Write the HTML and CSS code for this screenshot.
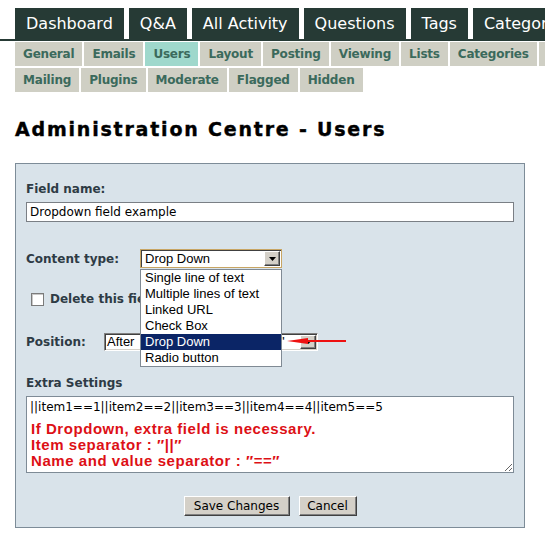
FILE: index.html
```html
<!DOCTYPE html>
<html lang="en">
<head>
<meta charset="utf-8">
<title>Administration Centre - Users</title>
<link rel="stylesheet" href="styles.css">
</head>
<body>
<div class="page">
  <nav class="main-nav">
    <a class="main-tab" href="#">Dashboard</a>
    <a class="main-tab" href="#">Q&amp;A</a>
    <a class="main-tab" href="#">All Activity</a>
    <a class="main-tab" href="#">Questions</a>
    <a class="main-tab" href="#">Tags</a>
    <a class="main-tab" href="#">Categories</a>
    <a class="main-tab" href="#">Users</a>
  </nav>

  <nav class="sub-nav">
    <div class="sub-row">
      <a class="sub-tab" href="#">General</a>
      <a class="sub-tab" href="#">Emails</a>
      <a class="sub-tab is-active" href="#">Users</a>
      <a class="sub-tab" href="#">Layout</a>
      <a class="sub-tab" href="#">Posting</a>
      <a class="sub-tab" href="#">Viewing</a>
      <a class="sub-tab" href="#">Lists</a>
      <a class="sub-tab" href="#">Categories</a>
      <a class="sub-tab" href="#">Permissions</a>
      <a class="sub-tab" href="#">Pages</a>
    </div>
    <div class="sub-row">
      <a class="sub-tab" href="#">Mailing</a>
      <a class="sub-tab" href="#">Plugins</a>
      <a class="sub-tab" href="#">Moderate</a>
      <a class="sub-tab" href="#">Flagged</a>
      <a class="sub-tab" href="#">Hidden</a>
    </div>
  </nav>

  <h1 class="title">Administration Centre - Users</h1>

  <form class="panel">
    <label class="field-label" for="field-name">Field name:</label>
    <input class="text-input" id="field-name" type="text" value="Dropdown field example">

    <div class="row row-type">
      <span class="field-label row-label">Content type:</span>
      <div class="combo combo-focus">
        <span class="combo-value">Drop Down</span>
        <span class="combo-btn"><svg width="7" height="4" viewBox="0 0 7 4"><polygon points="0,0 7,0 3.5,4" fill="#000"/></svg></span>
        <ul class="combo-list">
          <li>Single line of text</li>
          <li>Multiple lines of text</li>
          <li>Linked URL</li>
          <li>Check Box</li>
          <li class="is-selected">Drop Down</li>
          <li>Radio button</li>
        </ul>
      </div>
    </div>

    <label class="check-row">
      <span class="checkbox"></span>
      <span class="field-label">Delete this field</span>
    </label>

    <div class="row row-pos">
      <span class="field-label row-label">Position:</span>
      <div class="combo combo-wide">
        <span class="combo-value">After&nbsp; "Private notes for admin"</span>
        <span class="combo-btn"><svg width="7" height="4" viewBox="0 0 7 4"><polygon points="0,0 7,0 3.5,4" fill="#000"/></svg></span>
      </div>
      <svg class="pointer" width="60" height="10" viewBox="0 0 60 10">
        <line x1="18" y1="5" x2="59" y2="5" stroke="#ee1111" stroke-width="2"/>
        <polygon points="0,5 21,2 21,8" fill="#ee1111"/>
      </svg>
    </div>

    <span class="field-label extra-label">Extra Settings</span>
    <div class="extra-box">
      <textarea class="extra-input">||item1==1||item2==2||item3==3||item4==4||item5==5</textarea>
      <div class="extra-note">
        <p>If Dropdown, extra field is necessary.</p>
        <p>Item separator : ″||″</p>
        <p>Name and value separator : ″==″</p>
      </div>
    </div>

    <div class="actions">
      <button class="btn btn-save" type="button">Save Changes</button>
      <button class="btn btn-cancel" type="button">Cancel</button>
    </div>
  </form>
</div>
</body>
</html>
```

FILE: styles.css
```css
* {
  box-sizing: border-box;
}

html,
body {
  margin: 0;
  padding: 0;
  background: #fff;
}

body {
  width: 545px;
  height: 542px;
  overflow: hidden;
  font-family: "DejaVu Sans", Verdana, sans-serif;
  color: #000;
}

.page {
  padding-top: 8px;
}

/* top navigation */
.main-nav {
  display: flex;
  gap: 5px;
  padding-left: 15px;
  border-bottom: 2px solid #263a35;
  overflow: hidden;
  white-space: nowrap;
}

.main-tab {
  flex: none;
  display: block;
  height: 31px;
  padding: 1px 11px 0;
  line-height: 30px;
  background: #263a35;
  color: #fff;
  font-size: 16px;
  text-decoration: none;
}

/* admin sub navigation */
.sub-nav {
  margin-top: 1px;
  padding-left: 15px;
}

.sub-row {
  display: flex;
  gap: 2px;
  overflow: hidden;
  white-space: nowrap;
}

.sub-row + .sub-row {
  margin-top: 2px;
}

.sub-tab {
  flex: none;
  display: block;
  height: 24px;
  padding: 1px 8px 0;
  line-height: 23px;
  background: #cfcfc4;
  color: #3b6a5c;
  font-size: 12px;
  font-weight: bold;
  letter-spacing: -0.2px;
  text-decoration: none;
}

.sub-tab.is-active {
  background: #9fd8cc;
}

.title {
  margin: 26px 0 0 15px;
  font-size: 19px;
  line-height: 22px;
  font-weight: bold;
  letter-spacing: 1.8px;
  -webkit-text-stroke: 0.4px #000;
}

/* form panel */
.panel {
  margin: 23px 0 0 15px;
  width: 510px;
  padding: 18px 10px 11px;
  background: #d9e3ea;
  border: 1px solid #7d8c98;
  display: flex;
  flex-direction: column;
  align-items: flex-start;
}

.field-label {
  font-size: 12px;
  line-height: 14px;
  font-weight: bold;
  color: #2e3b45;
}

.text-input {
  margin: 6px 0 0;
  width: 488px;
  height: 20px;
  padding: 0 3px;
  border: 1px solid #7a7f85;
  background: #fff;
  font-family: "DejaVu Sans", Verdana, sans-serif;
  font-size: 12px;
  color: #000;
  outline: none;
}

.row {
  position: relative;
  display: flex;
  align-items: center;
}

.row-label {
  flex: none;
}

.row-type {
  margin-top: 27px;
}

.row-type .row-label {
  width: 114px;
}

.row-pos {
  margin-top: 27px;
}

.row-pos .row-label {
  width: 78px;
}

/* classic windows style combo boxes */
.combo {
  position: relative;
  display: flex;
  background: #fff;
  font-family: "Liberation Sans", Arial, sans-serif;
  font-size: 13px;
  color: #000;
}

.combo-focus {
  width: 142px;
  height: 19px;
  border: 1px solid #c8a563;
  box-shadow: inset 1px 1px 0 #404040;
}

.combo-wide {
  width: 214px;
  height: 18px;
  border: 1px solid;
  border-color: #808080 #fff #fff #808080;
  box-shadow: inset 1px 1px 0 #404040, inset -1px -1px 0 #d4d0c8;
}

.combo-value {
  flex: 1;
  min-width: 0;
  padding-left: 4px;
  line-height: 17px;
  white-space: nowrap;
  overflow: hidden;
}

.combo-wide .combo-value {
  padding-left: 2px;
  line-height: 16px;
}

.combo-btn {
  flex: none;
  width: 16px;
  height: 15px;
  margin: 1px 1px 1px 0;
  display: flex;
  align-items: center;
  justify-content: center;
  background: #d4d0c8;
  border: 1px solid;
  border-color: #fff #404040 #404040 #fff;
  box-shadow: inset -1px -1px 0 #808080;
}

.combo-wide .combo-btn {
  height: 14px;
}

.combo-list {
  position: absolute;
  z-index: 5;
  top: 19px;
  left: -1px;
  width: 142px;
  margin: 0;
  padding: 0;
  list-style: none;
  background: #fff;
  border: 1px solid #808a94;
}

.combo-list li {
  height: 16px;
  padding-left: 4px;
  line-height: 16px;
  white-space: nowrap;
}

.combo-list li.is-selected {
  background: #0b2566;
  color: #fff;
}

.check-row {
  margin-top: 24px;
  display: flex;
  align-items: center;
  gap: 6px;
  height: 14px;
}

.checkbox {
  width: 13px;
  height: 13px;
  margin-left: 5px;
  background: #fff;
  border: 1px solid #7b7b7b;
  box-shadow: inset 1px 1px 0 #c8c8c8;
}

.pointer {
  position: absolute;
  left: 261px;
  top: 3px;
}

.extra-label {
  margin-top: 25px;
}

.extra-box {
  position: relative;
  margin-top: 6px;
  width: 488px;
  height: 77px;
}

.extra-input {
  display: block;
  width: 100%;
  height: 100%;
  margin: 0;
  padding: 3px 3px;
  border: 1px solid #7e8b96;
  background: #fff;
  font-family: "DejaVu Sans", Verdana, sans-serif;
  font-size: 12px;
  line-height: 14px;
  color: #000;
  resize: both;
  outline: none;
}

.extra-note {
  position: absolute;
  top: 25px;
  left: 5px;
  color: #dd1016;
  font-family: "Liberation Sans", Arial, sans-serif;
  font-size: 15px;
  font-weight: bold;
  line-height: 16px;
  letter-spacing: 0.55px;
}

.extra-note p {
  margin: 0;
}

.actions {
  align-self: stretch;
  margin-top: 23px;
  display: flex;
  justify-content: center;
  gap: 9px;
}

.btn {
  height: 20px;
  padding: 0;
  background: #d4d0c8;
  border: 1px solid;
  border-color: #fff #404040 #404040 #fff;
  box-shadow: inset -1px -1px 0 #808080;
  font-family: "DejaVu Sans", Verdana, sans-serif;
  font-size: 12px;
  color: #000;
}

.btn-save {
  width: 106px;
}

.btn-cancel {
  width: 58px;
}
```
